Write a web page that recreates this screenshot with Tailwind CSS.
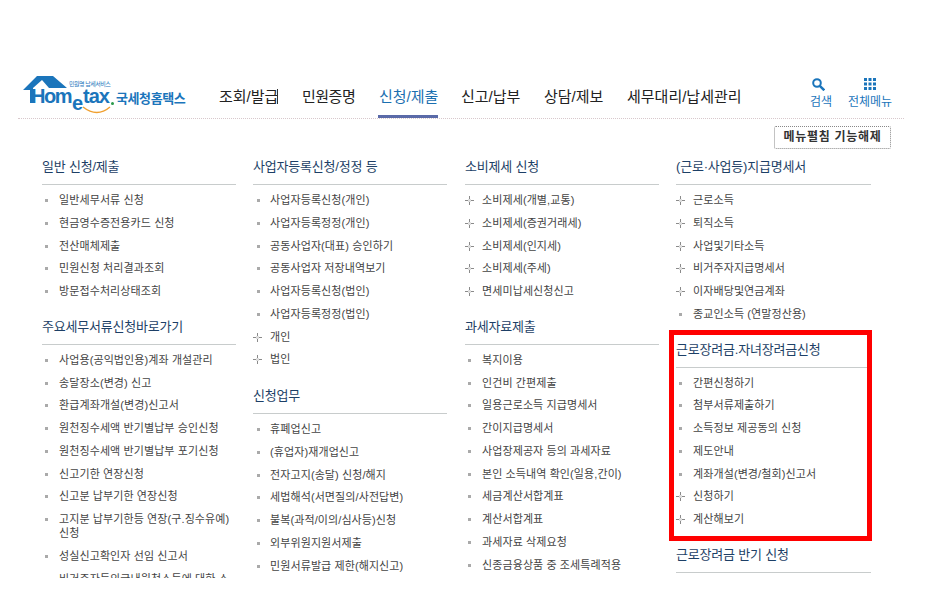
<!DOCTYPE html>
<html lang="ko"><head><meta charset="utf-8"><script src="https://cdn.jsdelivr.net/npm/@tailwindcss/browser@4"></script></head>
<body class="w-[944px] h-[610px] overflow-hidden bg-white font-['Liberation_Sans','Noto_Sans_CJK_KR',sans-serif]">
<header class="flex items-start h-[119px] ml-[18px] w-[886px] border-b border-dotted border-[#d8c8cc]">
 <div class="relative shrink-0 ml-[5px] mt-[74px] w-[196px] h-[42px]">
  <svg class="absolute left-0 top-0" width="92" height="42" viewBox="0 0 92 42"><path d="M0 16 L14 2 H30 L44 14 H26 L19 6 L10 14 V29 H7 V16 Z" fill="#1b75bb"/><path d="M60 33 Q74 44 87 33" stroke="#f0a030" stroke-width="1.5" fill="none"/></svg>
  <span class="absolute left-[8px] top-[14px] text-[20px] font-bold leading-[16px] tracking-[-1.5px] text-[#1b75bb]">Hom</span>
  <span class="absolute left-[49px] top-[21px] text-[20px] font-bold leading-[16px] text-[#1b75bb]">e</span>
  <span class="absolute left-[60px] top-[14px] text-[20px] font-bold leading-[16px] tracking-[-1px] text-[#1b75bb]">tax</span>
  <span class="absolute left-[88px] top-[28px] size-[3px] rounded-full bg-[#2a9a4a]"></span>
  <span class="absolute left-[46px] top-[6px] text-[6px] leading-[8px] whitespace-nowrap text-[#1b75bb] tracking-[-0.5px]">민원명 납세서비스</span>
  <span class="absolute left-[93px] top-[17px] text-[13px] font-bold leading-[16px] whitespace-nowrap text-[#1b75bb] tracking-[-0.4px]">국세청홈택스</span>
 </div>
 <nav class="flex mt-[87px] shrink-0 text-[15px] leading-[20px] text-[#222] whitespace-nowrap">
  <span class="relative w-[83px]">조회/발급<i class="absolute left-[58px] top-[2px] w-px h-[15px] bg-[#333]"></i></span>
  <span class="w-[77px] tracking-[-0.5px]">민원증명</span>
  <span class="relative w-[82px] text-[#1b6fb0]">신청/제출<i class="absolute left-[-1px] top-[28px] w-[60px] h-[3px] bg-[#5a6aa8]"></i></span>
  <span class="w-[83px]">신고/납부</span><span class="w-[83px]">상담/제보</span><span class="w-[115px]">세무대리/납세관리</span>
 </nav>
 <div class="shrink-0 ml-[66px] mt-[78px] w-[26px] text-center text-[#1b75bb] text-[12px] leading-[14px]"><svg class="ml-[4px]" width="13" height="13" viewBox="0 0 13 13"><circle cx="5" cy="5" r="3.8" fill="none" stroke="#1b75bb" stroke-width="2"/><path d="M7.8 7.8L12.3 12.3" stroke="#1b75bb" stroke-width="2.5"/></svg><div class="mt-[4px] whitespace-nowrap">검색</div></div>
 <div class="shrink-0 ml-[14px] mt-[78px] w-[44px] text-center text-[#1b75bb] text-[12px] leading-[14px]"><svg class="mx-auto" width="12" height="12" viewBox="0 0 12 12" fill="#1b75bb"><rect width="3" height="3"/><rect x="4.5" width="3" height="3"/><rect x="9" width="3" height="3"/><rect y="4.5" width="3" height="3"/><rect x="4.5" y="4.5" width="3" height="3"/><rect x="9" y="4.5" width="3" height="3"/><rect y="9" width="3" height="3"/><rect x="4.5" y="9" width="3" height="3"/><rect x="9" y="9" width="3" height="3"/></svg><div class="mt-[5px] whitespace-nowrap">전체메뉴</div></div>
</header>
<div class="flex justify-end w-[891px] mt-[7px]"><span class="w-[117px] h-[23px] border border-dotted border-[#888] rounded-[2px] text-center text-[12px] leading-[21px] font-bold text-[#333] tracking-[0.7px]">메뉴펼침 기능해제</span></div>
<main class="grid grid-cols-[211px_212px_211px_195px] ml-[42px] mt-[8px] h-[421px] overflow-hidden text-[11px] text-[#444] leading-[14px] tracking-[0.1px]">
 <section class="w-[194px]">
  <h2 class="text-[13px] leading-[20px] tracking-[-0.2px] text-[#1d3f66] pb-[7px] border-b border-[#c8cccc] mb-[8px]">일반 신청/제출</h2>
  <ul class="[&>li]:relative [&>li]:pl-[17px] [&>li]:pb-[8.75px] [&>li]:before:absolute [&>li]:before:left-[3px] [&>li]:before:top-[6px] [&>li]:before:size-[3px] [&>li]:before:bg-[#aaa]">
   <li>일반세무서류 신청</li><li>현금영수증전용카드 신청</li><li>전산매체제출</li><li>민원신청 처리결과조회</li><li>방문접수처리상태조회</li>
  </ul>
  <h2 class="mt-[10px] text-[13px] leading-[20px] tracking-[-0.2px] text-[#1d3f66] pb-[7px] border-b border-[#c8cccc] mb-[8px]">주요세무서류신청바로가기</h2>
  <ul class="[&>li]:relative [&>li]:pl-[17px] [&>li]:pb-[8.75px] [&>li]:before:absolute [&>li]:before:left-[3px] [&>li]:before:top-[6px] [&>li]:before:size-[3px] [&>li]:before:bg-[#aaa]">
   <li>사업용(공익법인용)계좌 개설관리</li><li>송달장소(변경) 신고</li><li>환급계좌개설(변경)신고서</li><li>원천징수세액 반기별납부 승인신청</li><li>원천징수세액 반기별납부 포기신청</li><li>신고기한 연장신청</li><li>신고분 납부기한 연장신청</li><li>고지분 납부기한등 연장(구.징수유예) 신청</li><li>성실신고확인자 선임 신고서</li><li>비거주자등의국내원천소득에 대한 소</li>
  </ul>
 </section>
 <section class="w-[194px]">
  <h2 class="text-[13px] leading-[20px] tracking-[-0.2px] text-[#1d3f66] pb-[7px] border-b border-[#c8cccc] mb-[8px]">사업자등록신청/정정 등</h2>
  <ul class="[&>li]:relative [&>li]:pl-[17px] [&>li]:pb-[8.75px]">
   <li class="before:absolute before:left-[4px] before:top-[6px] before:size-[3px] before:bg-[#aaa]">사업자등록신청(개인)</li>
   <li class="before:absolute before:left-[4px] before:top-[6px] before:size-[3px] before:bg-[#aaa]">사업자등록정정(개인)</li>
   <li class="before:absolute before:left-[4px] before:top-[6px] before:size-[3px] before:bg-[#aaa]">공동사업자(대표) 승인하기</li>
   <li class="before:absolute before:left-[4px] before:top-[6px] before:size-[3px] before:bg-[#aaa]">공동사업자 저장내역보기</li>
   <li class="before:absolute before:left-[4px] before:top-[6px] before:size-[3px] before:bg-[#aaa]">사업자등록신청(법인)</li>
   <li class="before:absolute before:left-[4px] before:top-[6px] before:size-[3px] before:bg-[#aaa]">사업자등록정정(법인)</li>
   <li><svg class="absolute left-0 top-[3px]" width="9" height="9" viewBox="0 0 9 9"><path d="M4 0h1v3H4zM4 6h1v3H4zM0 4h3v1H0zM6 4h3v1H6z" fill="#8a8a8a"/><path d="M3 3h3v3H3z" fill="#ddd"/></svg>개인</li>
   <li><svg class="absolute left-0 top-[3px]" width="9" height="9" viewBox="0 0 9 9"><path d="M4 0h1v3H4zM4 6h1v3H4zM0 4h3v1H0zM6 4h3v1H6z" fill="#8a8a8a"/><path d="M3 3h3v3H3z" fill="#ddd"/></svg>법인</li>
  </ul>
  <h2 class="mt-[11px] text-[13px] leading-[20px] tracking-[-0.2px] text-[#1d3f66] pb-[7px] border-b border-[#c8cccc] mb-[8px]">신청업무</h2>
  <ul class="[&>li]:relative [&>li]:pl-[17px] [&>li]:pb-[8.75px] [&>li]:before:absolute [&>li]:before:left-[4px] [&>li]:before:top-[6px] [&>li]:before:size-[3px] [&>li]:before:bg-[#aaa]">
   <li>휴폐업신고</li><li>(휴업자)재개업신고</li><li>전자고지(송달) 신청/해지</li><li>세법해석(서면질의/사전답변)</li><li>불복(과적/이의/심사등)신청</li><li>외부위원지원서제출</li><li>민원서류발급 제한(해지신고)</li>
  </ul>
 </section>
 <section class="w-[194px]">
  <h2 class="text-[13px] leading-[20px] tracking-[-0.2px] text-[#1d3f66] pb-[7px] border-b border-[#c8cccc] mb-[8px]">소비제세 신청</h2>
  <ul class="[&>li]:relative [&>li]:pl-[17px] [&>li]:pb-[8.75px]">
   <li><svg class="absolute left-0 top-[3px]" width="9" height="9" viewBox="0 0 9 9"><path d="M4 0h1v3H4zM4 6h1v3H4zM0 4h3v1H0zM6 4h3v1H6z" fill="#8a8a8a"/><path d="M3 3h3v3H3z" fill="#ddd"/></svg>소비제세(개별,교통)</li>
   <li><svg class="absolute left-0 top-[3px]" width="9" height="9" viewBox="0 0 9 9"><path d="M4 0h1v3H4zM4 6h1v3H4zM0 4h3v1H0zM6 4h3v1H6z" fill="#8a8a8a"/><path d="M3 3h3v3H3z" fill="#ddd"/></svg>소비제세(증권거래세)</li>
   <li><svg class="absolute left-0 top-[3px]" width="9" height="9" viewBox="0 0 9 9"><path d="M4 0h1v3H4zM4 6h1v3H4zM0 4h3v1H0zM6 4h3v1H6z" fill="#8a8a8a"/><path d="M3 3h3v3H3z" fill="#ddd"/></svg>소비제세(인지세)</li>
   <li><svg class="absolute left-0 top-[3px]" width="9" height="9" viewBox="0 0 9 9"><path d="M4 0h1v3H4zM4 6h1v3H4zM0 4h3v1H0zM6 4h3v1H6z" fill="#8a8a8a"/><path d="M3 3h3v3H3z" fill="#ddd"/></svg>소비제세(주세)</li>
   <li><svg class="absolute left-0 top-[3px]" width="9" height="9" viewBox="0 0 9 9"><path d="M4 0h1v3H4zM4 6h1v3H4zM0 4h3v1H0zM6 4h3v1H6z" fill="#8a8a8a"/><path d="M3 3h3v3H3z" fill="#ddd"/></svg>면세미납세신청신고</li>
  </ul>
  <h2 class="mt-[10px] text-[13px] leading-[20px] tracking-[-0.2px] text-[#1d3f66] pb-[7px] border-b border-[#c8cccc] mb-[8px]">과세자료제출</h2>
  <ul class="[&>li]:relative [&>li]:pl-[17px] [&>li]:pb-[8.75px] [&>li]:before:absolute [&>li]:before:left-[3px] [&>li]:before:top-[6px] [&>li]:before:size-[3px] [&>li]:before:bg-[#aaa]">
   <li>복지이용</li><li>인건비 간편제출</li><li>일용근로소득 지급명세서</li><li>간이지급명세서</li><li>사업장제공자 등의 과세자료</li><li>본인 소득내역 확인(일용,간이)</li><li>세금계산서합계표</li><li>계산서합계표</li><li>과세자료 삭제요청</li><li>신종금융상품 중 조세특례적용</li>
  </ul>
 </section>
 <section class="w-[195px]">
  <h2 class="text-[13px] leading-[20px] tracking-[-0.2px] text-[#1d3f66] pb-[7px] border-b border-[#c8cccc] mb-[8px]">(근로·사업등)지급명세서</h2>
  <ul class="[&>li]:relative [&>li]:pl-[17px] [&>li]:pb-[8.75px]">
   <li><svg class="absolute left-0 top-[3px]" width="9" height="9" viewBox="0 0 9 9"><path d="M4 0h1v3H4zM4 6h1v3H4zM0 4h3v1H0zM6 4h3v1H6z" fill="#8a8a8a"/><path d="M3 3h3v3H3z" fill="#ddd"/></svg>근로소득</li>
   <li><svg class="absolute left-0 top-[3px]" width="9" height="9" viewBox="0 0 9 9"><path d="M4 0h1v3H4zM4 6h1v3H4zM0 4h3v1H0zM6 4h3v1H6z" fill="#8a8a8a"/><path d="M3 3h3v3H3z" fill="#ddd"/></svg>퇴직소득</li>
   <li><svg class="absolute left-0 top-[3px]" width="9" height="9" viewBox="0 0 9 9"><path d="M4 0h1v3H4zM4 6h1v3H4zM0 4h3v1H0zM6 4h3v1H6z" fill="#8a8a8a"/><path d="M3 3h3v3H3z" fill="#ddd"/></svg>사업및기타소득</li>
   <li><svg class="absolute left-0 top-[3px]" width="9" height="9" viewBox="0 0 9 9"><path d="M4 0h1v3H4zM4 6h1v3H4zM0 4h3v1H0zM6 4h3v1H6z" fill="#8a8a8a"/><path d="M3 3h3v3H3z" fill="#ddd"/></svg>비거주자지급명세서</li>
   <li><svg class="absolute left-0 top-[3px]" width="9" height="9" viewBox="0 0 9 9"><path d="M4 0h1v3H4zM4 6h1v3H4zM0 4h3v1H0zM6 4h3v1H6z" fill="#8a8a8a"/><path d="M3 3h3v3H3z" fill="#ddd"/></svg>이자배당및연금계좌</li>
   <li class="before:absolute before:left-[3px] before:top-[6px] before:size-[3px] before:bg-[#aaa]">종교인소득 (연말정산용)</li>
  </ul>
  <div class="relative mt-[10px]">
   <div class="absolute left-[-7px] right-[-1px] top-[-9.5px] bottom-[-6.25px] border-[5px] border-[#ff0000]"></div>
   <h2 class="text-[13px] leading-[20px] tracking-[-0.2px] text-[#1d3f66] pb-[7px] border-b border-[#c8cccc] mb-[8px]">근로장려금.자녀장려금신청</h2>
   <ul class="[&>li]:relative [&>li]:pl-[17px] [&>li]:pb-[8.75px]">
    <li class="before:absolute before:left-[3px] before:top-[6px] before:size-[3px] before:bg-[#aaa]">간편신청하기</li>
    <li class="before:absolute before:left-[3px] before:top-[6px] before:size-[3px] before:bg-[#aaa]">첨부서류제출하기</li>
    <li class="before:absolute before:left-[3px] before:top-[6px] before:size-[3px] before:bg-[#aaa]">소득정보 제공동의 신청</li>
    <li class="before:absolute before:left-[3px] before:top-[6px] before:size-[3px] before:bg-[#aaa]">제도안내</li>
    <li class="before:absolute before:left-[3px] before:top-[6px] before:size-[3px] before:bg-[#aaa]">계좌개설(변경/철회)신고서</li>
    <li><svg class="absolute left-0 top-[3px]" width="9" height="9" viewBox="0 0 9 9"><path d="M4 0h1v3H4zM4 6h1v3H4zM0 4h3v1H0zM6 4h3v1H6z" fill="#8a8a8a"/><path d="M3 3h3v3H3z" fill="#ddd"/></svg>신청하기</li>
    <li><svg class="absolute left-0 top-[3px]" width="9" height="9" viewBox="0 0 9 9"><path d="M4 0h1v3H4zM4 6h1v3H4zM0 4h3v1H0zM6 4h3v1H6z" fill="#8a8a8a"/><path d="M3 3h3v3H3z" fill="#ddd"/></svg>계산해보기</li>
   </ul>
  </div>
  <h2 class="mt-[10px] text-[13px] leading-[20px] tracking-[-0.2px] text-[#1d3f66] pb-[7px] border-b border-[#c8cccc]">근로장려금 반기 신청</h2>
 </section>
</main>
</body></html>
